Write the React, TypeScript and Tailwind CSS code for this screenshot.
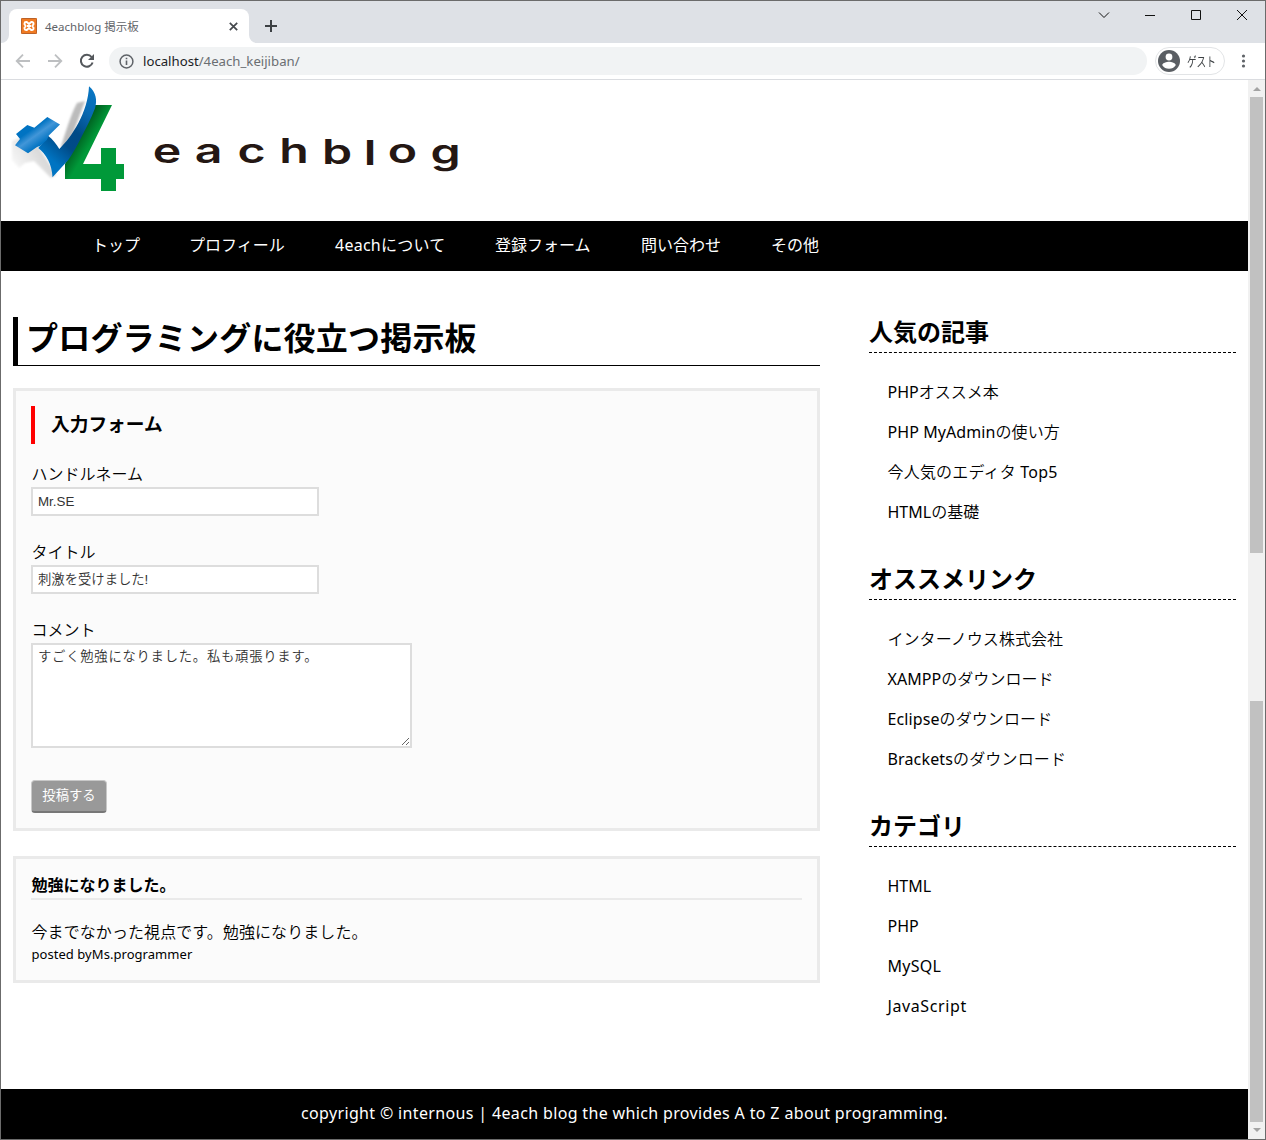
import React from "react";

const nav = [
  { t: "トップ", w: "w-[47px]" },
  { t: "プロフィール", w: "w-24" },
  { t: "4eachについて", w: "w-[110px] tracking-[0.25px]" },
  { t: "登録フォーム", w: "w-24" },
  { t: "問い合わせ", w: "w-20" },
  { t: "その他", w: "w-12" },
];

const sections = [
  {
    title: "人気の記事",
    items: [
      { t: "PHPオススメ本", c: "" },
      { t: "PHP MyAdminの使い方", c: "tracking-[0.08px]" },
      { t: "今人気のエディタ Top5", c: "tracking-[0.2px]" },
      { t: "HTMLの基礎", c: "" },
    ],
  },
  {
    title: "オススメリンク",
    items: [
      { t: "インターノウス株式会社", c: "tracking-[0.05px]" },
      { t: "XAMPPのダウンロード", c: "tracking-[0.05px]" },
      { t: "Eclipseのダウンロード", c: "tracking-[0.1px]" },
      { t: "Bracketsのダウンロード", c: "tracking-[0.15px]" },
    ],
  },
  {
    title: "カテゴリ",
    items: [
      { t: "HTML", c: "" },
      { t: "PHP", c: "" },
      { t: "MySQL", c: "tracking-[0.25px]" },
      { t: "JavaScript", c: "tracking-[0.6px]" },
    ],
  },
];

const wordmark: [string, number, number][] = [
  ["e", 167, 163], ["a", 208.5, 163], ["c", 251.5, 163], ["h", 294, 163],
  ["b", 337, 164], ["l", 370, 164.5], ["o", 402.5, 163], ["g", 445.5, 163.5],
];

/* Japanese runs use a lighter weight than Latin runs. */
function Mixed({ text }: { text: string }) {
  return (
    <>
      {text.split(/([ -~]+)/).map((part, i) => (
        <span key={i} className={i % 2 ? "font-normal" : "font-[350]"}>{part}</span>
      ))}
    </>
  );
}

function TabStrip() {
  return (
    <div className="flex h-[42px] shrink-0 bg-[#dee1e6]">
      <div className="relative mt-2 ml-2 flex h-[34px] w-60 items-center rounded-t-lg bg-white">
        <svg className="absolute -left-2 bottom-0" width="8" height="8"><path d="M8 0v8H0a8 8 0 0 0 8-8z" fill="#fff" /></svg>
        <svg className="absolute -right-2 bottom-0" width="8" height="8"><path d="M0 0v8h8a8 8 0 0 1-8-8z" fill="#fff" /></svg>
        <svg className="ml-3 shrink-0" width="16" height="16" viewBox="0 0 16 16">
          <rect width="16" height="16" rx="1" fill="#f07a22" />
          <rect x=".5" y=".5" width="15" height="15" rx="1" fill="none" stroke="#b9622a" />
          <path d="M6 8h4M5 4h.8L8 6l2.200-2h.8a1.500 1.500 0 0 1 1.500 1.500v.8L11.300 8l1.200 1.700v.8A1.500 1.500 0 0 1 11 12h-.8L8 10l-2.200 2H5a1.500 1.500 0 0 1-1.500-1.500v-.8L4.700 8 3.500 6.300v-.8A1.500 1.500 0 0 1 5 4z" fill="none" stroke="#fff" strokeWidth="1.900" strokeLinejoin="round" />
        </svg>
        <span className="mt-px ml-2 text-[11.5px] whitespace-nowrap text-[#5f6368]">4eachblog 掲示板</span>
        <svg className="mr-[11px] ml-auto" width="9" height="9" viewBox="0 0 9 9"><path d="M.8.8l7.400 7.400M8.200.8L.8 8.200" stroke="#45494d" strokeWidth="1.700" /></svg>
      </div>
      <svg className="mt-[18px] ml-[15px]" width="13" height="13"><path d="M7 1v12M1 7h12" stroke="#3c4043" strokeWidth="2" /></svg>
      <div className="ml-auto flex items-start pt-[7px]">
        <svg width="160" height="13" viewBox="0 0 160 13" fill="none" stroke="#111" className="mr-4">
          <path d="M10 4.500l5 5 5-5" />
          <path d="M56 7.500h10M102.500 2.500h9v9h-9zM148 2l10 10M158 2l-10 10" />
        </svg>
      </div>
    </div>
  );
}

function Toolbar() {
  return (
    <div className="flex h-[37px] shrink-0 items-center border-b border-[#dadce0] bg-white">
      <svg className="ml-[14px]" width="84" height="18" viewBox="0 0 84 18" fill="none" strokeWidth="1.800">
        <path d="M15 9H2M8 2.700L1.700 9 8 15.300M33 9h13M40 2.700L46.300 9 40 15.300" stroke="#bdbfc1" />
        <path d="M76.600 5A6 6 0 1 0 77.600 10.500" stroke="#54585c" strokeWidth="2" />
        <path d="M79 2v6h-6z" fill="#54585c" />
      </svg>
      <div className="ml-[10px] flex h-7 w-[1038px] items-center rounded-full bg-[#f1f3f4]">
        <svg className="ml-[10px]" width="15" height="15" viewBox="0 0 15 15"><circle cx="7.500" cy="7.500" r="6.400" fill="none" stroke="#5f6368" strokeWidth="1.500" /><path d="M7.500 6.500V11M7.500 3.800v1.500" stroke="#5f6368" strokeWidth="1.600" /></svg>
        <span className="mt-px ml-[9px] text-[13.2px] text-[#6a6e72]"><span className="text-[#202124]">localhost</span>/4each_keijiban/</span>
      </div>
      <div className="ml-2 flex h-7 w-[70px] items-center rounded-full border border-[#e2e4e6]">
        <svg className="ml-[2px] shrink-0" width="22" height="22" viewBox="0 0 22 22"><circle cx="11" cy="11" r="11" fill="#5a5e63" /><circle cx="11" cy="7" r="3.400" fill="#fff" /><path d="M4.300 15.200c0-2.200 4.500-3.400 6.700-3.400s6.700 1.200 6.700 3.400C16.300 17.500 13.800 18.800 11 18.800s-5.300-1.300-6.700-3.600z" fill="#fff" /></svg>
        <span className="mt-0.5 ml-[7px] inline-block w-7 origin-left scale-x-[0.74] text-[13px] whitespace-nowrap text-[#3c4043]">ゲスト</span>
      </div>
      <svg className="ml-[15px]" width="6" height="14" fill="#5f6368"><circle cx="3.500" cy="2" r="1.600" /><circle cx="3.500" cy="7" r="1.600" /><circle cx="3.500" cy="12" r="1.600" /></svg>
    </div>
  );
}

function Logo() {
  return (
    <svg className="block shrink-0" width="480" height="141" viewBox="1 80 480 141">
      <defs>
        <linearGradient id="tick" x1="95" y1="88" x2="40" y2="150" gradientUnits="userSpaceOnUse">
          <stop offset="0" stopColor="#0878c6" /><stop offset=".28" stopColor="#0869b1" /><stop offset=".55" stopColor="#004a86" /><stop offset=".75" stopColor="#004b88" /><stop offset="1" stopColor="#0074c2" />
        </linearGradient>
        <linearGradient id="bar" x1="25" y1="125" x2="42" y2="149" gradientUnits="userSpaceOnUse">
          <stop offset="0" stopColor="#0073c2" /><stop offset=".25" stopColor="#0073c2" /><stop offset=".5" stopColor="#4296d8" /><stop offset=".85" stopColor="#0073c2" />
        </linearGradient>
        <linearGradient id="four" x1="80" y1="130" x2="100" y2="142" gradientUnits="userSpaceOnUse">
          <stop offset="0" stopColor="#00561c" /><stop offset=".7" stopColor="#009939" />
        </linearGradient>
        <linearGradient id="shade" x1="10" y1="160" x2="60" y2="130" gradientUnits="userSpaceOnUse">
          <stop offset="0" stopColor="#f8f8f8" /><stop offset="1" stopColor="#bcbcbc" />
        </linearGradient>
        <filter id="soft"><feGaussianBlur stdDeviation=".9" /></filter>
      </defs>
      <path d="M12 141l8-3 18 8 18 29-5 3-17-17-9 2-6 5-7-8zM61 146c5-14 9-30 16-43l8-2-20 54z" fill="url(#shade)" filter="url(#soft)" />
      <path d="M93 105h19L83 164h18v-16h15v16h8v15h-8v12h-15v-12H65v-15z" fill="url(#four)" />
      <path d="M89 86.300c7 6 8.500 14 6 22C91 119 86 128 81.700 136.500C77 146 73 153 68.300 160L52.500 177.300C52 164 46 154 38.300 148l10-12c4 3 8 8 11 13C72 137 88 112 89 86.300z" fill="url(#tick)" />
      <path d="M47.300 117L60 124.500 48.800 135.500l-2 4.500-7 6-2.800 1-9 6.300-13-8 5-6.300-4-5 11.300-9 7 2.700z" fill="url(#bar)" />
      <g fill="#241713" fontFamily="Inter, sans-serif" fontWeight="600" fontSize="34">
        {wordmark.map(([c, x, y]) => (
          <text key={c} transform={`translate(${x} ${y}) scale(1.420 1)`} textAnchor="middle">{c}</text>
        ))}
      </g>
    </svg>
  );
}

function Sidebar() {
  return (
    <aside className="mt-11 ml-[49px] w-[367px]">
      {sections.map((s) => (
        <section key={s.title} className="mb-[29px]">
          <h2 className="h-[38px] border-b border-dashed border-black text-2xl leading-[34px] font-bold">{s.title}</h2>
          <ul className="mt-[19px] mb-[30px] pl-[18.5px]">
            {s.items.map((i) => <li key={i.t} className={"h-10 leading-10 whitespace-nowrap " + i.c}><Mixed text={i.t} /></li>)}
          </ul>
        </section>
      ))}
    </aside>
  );
}

const field = "block border-2 border-[#ddd] bg-white px-[5px] text-[13.333px] text-[#333] outline-none";

function Main() {
  return (
    <main className="mt-[46px] ml-3 w-[807px]">
      <h1 className="h-[49px] border-b border-l-5 border-black pl-2 text-[32px] leading-[42px] font-bold tracking-[0.2px]">プログラミングに役立つ掲示板</h1>
      <form className="mt-[22px] h-[443px] border-3 border-[#eaeaea] bg-[#fbfbfb] px-[15px] pt-[15px]">
        <h3 className="h-[38px] border-l-4 border-[#f00] pl-4 text-[18.72px] leading-[36px] font-bold text-black">入力フォーム</h3>
        <label className="mt-[18px] block h-[25px] pl-[0.5px] leading-[25px] font-[350]">ハンドルネーム</label>
        <input className={field + " h-[29px] w-72 font-['Liberation_Sans','Noto_Sans_CJK_JP',sans-serif]"} defaultValue="Mr.SE" />
        <label className="mt-6 block h-[25px] pl-[0.5px] leading-[25px] font-[350]">タイトル</label>
        <input className={field + " h-[29px] w-72 pb-[3px] font-['Liberation_Sans','Noto_Sans_CJK_JP',sans-serif] font-[350]"} defaultValue="刺激を受けました!" />
        <label className="mt-6 block h-[25px] pl-[0.5px] leading-[25px] font-[350]">コメント</label>
        <textarea className={field + " h-[105px] w-[381px] resize pt-[2px] font-['Noto_Sans_CJK_JP',monospace] leading-[18px] font-[350] tracking-[0.75px]"} defaultValue="すごく勉強になりました。私も頑張ります。" />
        <button type="button" className="mt-8 block h-[33px] w-[76px] rounded border border-b-2 border-[#c8c8c8] border-b-[#777] bg-[#999] pb-px text-[13.333px] text-white">投稿する</button>
      </form>
      <article className="mt-[25px] h-[127px] border-3 border-[#eaeaea] bg-[#fbfbfb] px-[15px] pt-[13px]">
        <h3 className="h-7 border-b-2 border-[#eaeaea] pl-[0.5px] leading-[26px] font-bold">勉強になりました。</h3>
        <p className="mt-5 h-6 pl-[0.5px] leading-6 font-[350] tracking-[0.08px]">今までなかった視点です。勉強になりました。</p>
        <p className="h-5 pl-[0.5px] text-[13px] leading-5 tracking-[0.05px]">posted byMs.programmer</p>
      </article>
    </main>
  );
}

function Scrollbar() {
  return (
    <div className="flex w-[17px] shrink-0 flex-col items-center bg-[#f1f1f1]">
      <svg className="shrink-0" width="13" height="17"><path d="M3 11l4-4 4 4z" fill="#a3a3a3" /></svg>
      <div className="h-[456px] w-[13px] shrink-0 bg-[#c1c1c1]" />
      <div className="mt-[148px] h-[421px] w-[13px] shrink-0 bg-[#c1c1c1]" />
      <svg className="shrink-0" width="13" height="17"><path d="M3 6l4 4 4-4z" fill="#a3a3a3" /></svg>
    </div>
  );
}

export default function App() {
  return (
    <div className="flex h-[1140px] w-[1266px] flex-col overflow-hidden border border-[#6b6b6b] bg-white font-['Noto_Sans','Noto_Sans_CJK_JP',sans-serif] text-base text-black">
      <TabStrip />
      <Toolbar />
      <div className="flex h-[1059px]">
        <div className="flex w-[1247px] shrink-0 flex-col">
          <Logo />
          <nav className="flex h-[50px] shrink-0 items-center gap-[50px] bg-black pb-0.5 pl-[91px] text-white">
            {nav.map((n) => <a key={n.t} className={n.w + " whitespace-nowrap"}>{n.t}</a>)}
          </nav>
          <div className="flex h-[818px] shrink-0"><Main /><Sidebar /></div>
          <footer className="h-[50px] bg-black text-center leading-[48px] tracking-[0.35px] text-white">copyright © internous | 4each blog the which provides A to Z about programming.</footer>
        </div>
        <Scrollbar />
      </div>
    </div>
  );
}
